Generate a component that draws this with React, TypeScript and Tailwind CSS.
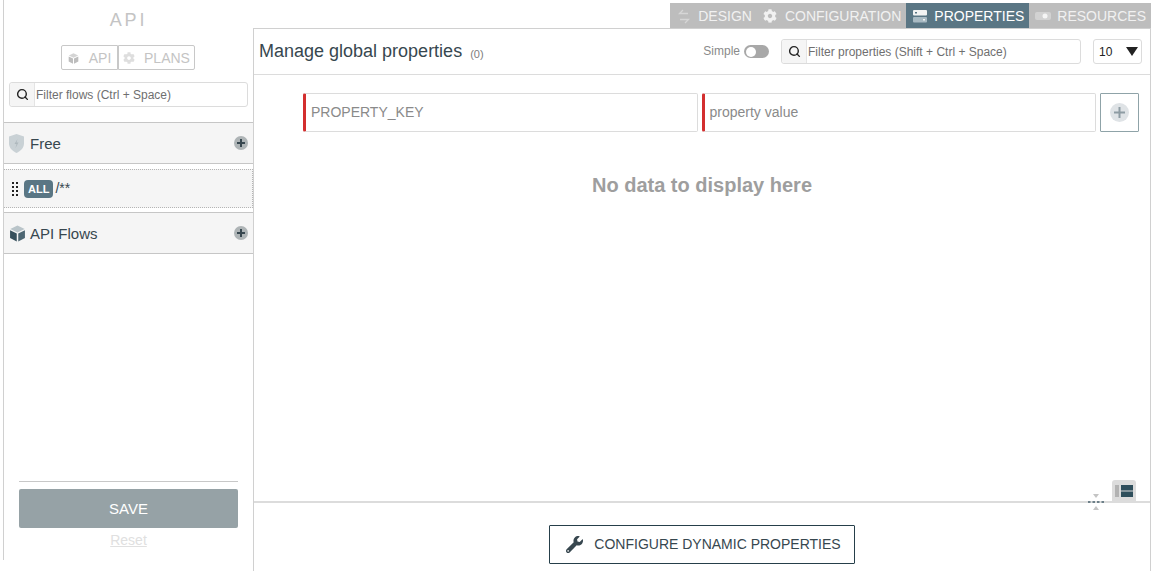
import { Search } from 'lucide-react';
import { FaCog, FaWrench } from 'react-icons/fa';

const font = 'font-["Liberation_Sans",Arial,sans-serif]';

function SearchAddon() {
  return (
    <span className="flex w-[25px] shrink-0 items-center justify-center self-stretch rounded-l-[3px] border-r border-[#e4e4e4] bg-[#f5f5f5]">
      <Search size={13} strokeWidth={2.6} className="text-[#222]" />
    </span>
  );
}

function CubeIcon({ size, top, left, right }: { size: number; top: string; left: string; right: string }) {
  return (
    <svg width={size} height={size} viewBox="0 0 16 16">
      <path d="M8 0.5 14.8 3.8 8 7 1.2 3.8Z" fill={top} />
      <path d="M1 5 7.3 8V15.5L1 12.2Z" fill={left} />
      <path d="M15 5 8.7 8V15.5L15 12.2Z" fill={right} />
    </svg>
  );
}

function PlusDot() {
  return (
    <span className="flex h-[14px] w-[14px] items-center justify-center rounded-full bg-[#aeb4b6]">
      <svg width="10" height="10" viewBox="0 0 10 10">
        <path d="M5 1V9M1 5H9" stroke="#37474f" strokeWidth="2" />
      </svg>
    </span>
  );
}

function GroupHeader({ icon, label }: { icon: React.ReactNode; label: string }) {
  return (
    <div className="flex h-[42px] items-center border-y border-[#c6c6c6] bg-[#f5f5f5] px-[5px]">
      <span className="flex w-[21px] justify-start">{icon}</span>
      <span className="flex-1 pt-[2px] text-[15px] text-[#37474f]">{label}</span>
      <PlusDot />
    </div>
  );
}

function Sidebar() {
  return (
    <aside className="flex h-[560px] w-[250px] shrink-0 flex-col border-l border-[#d0d0d0]">
      <h2 className="mt-[11px] h-[18px] text-center text-[18px] leading-[18px] font-normal tracking-[0.16em] text-[#c4c4c4]">API</h2>
      <div className="mt-[16px] flex justify-center pr-[1px]">
        <button className="flex h-[25px] w-[57px] items-center justify-center gap-[10px] rounded-l-[2px] border border-[#c8c8c8] pt-[1px] text-[14px] text-[#c4c4c4]">
          <CubeIcon size={11} top="#d4d4d4" left="#bdbdbd" right="#bdbdbd" />
          API
        </button>
        <button className="flex h-[25px] w-[77px] items-center justify-center gap-[9px] rounded-r-[2px] border border-[#c8c8c8] pt-[1px] text-[14px] text-[#c4c4c4]">
          <FaCog size={12} className="text-[#dedede]" />
          PLANS
        </button>
      </div>
      <div className="mt-[12px] ml-[5px] flex h-[25px] w-[239px] items-center rounded-[3px] border border-[#dcdcdc]">
        <SearchAddon />
        <span className="pl-[1px] text-[12px] text-[#6f6f6f]">Filter flows (Ctrl + Space)</span>
      </div>
      <div className="mt-[15px]">
        <GroupHeader
          label="Free"
          icon={
            <svg width="15" height="19" viewBox="0 0 15 19">
              <path d="M7.5 0 15 2.5V9.5C15 14 11.5 17 7.5 19 3.5 17 0 14 0 9.5V2.5Z" fill="#c9d1d5" />
              <path d="M8.5 5 5.5 10H7.5L6.5 14 9.5 8.5H7.5Z" fill="#aeb8bd" />
            </svg>
          }
        />
      </div>
      <div className="mt-[5px] flex h-[39px] items-center border-y border-r border-dotted border-[#b5b5b5] bg-[#f5f5f5] pl-[8px]">
        <span className="grid w-[6px] grid-cols-2 gap-x-[2px] gap-y-[2px]">
          {[0, 1, 2, 3, 4, 5, 6, 7].map((i) => (
            <span key={i} className="h-[2px] w-[2px] bg-[#222]" />
          ))}
        </span>
        <span className="ml-[6px] rounded-[4px] bg-[#5a7684] px-[4px] py-[2px] text-[11px] leading-[14px] font-bold text-white">ALL</span>
        <span className="ml-[2px] text-[14px] text-[#37474f]">/**</span>
      </div>
      <div className="mt-[4px]">
        <GroupHeader label="API Flows" icon={<CubeIcon size={17} top="#b9c4c9" left="#37505c" right="#4d6672" />} />
      </div>
      <div className="mx-[15px] mt-auto border-t border-[#c8c8c8] pt-[7px]">
        <button className="flex h-[39px] w-full items-center justify-center rounded-[2px] bg-[#96a2a6] pt-[1px] text-[15px] text-white">SAVE</button>
        <div className="pb-[8px] text-center">
          <a className="text-[14px] leading-[16px] text-[#e0e0e0] underline">Reset</a>
        </div>
      </div>
    </aside>
  );
}

function Tab({ icon, label, active, className }: { icon: React.ReactNode; label: string; active?: boolean; className: string }) {
  return (
    <div className={`flex h-full items-center pt-[1px] text-[14px] whitespace-nowrap ${active ? 'bg-[#5a7684] text-white' : 'text-[#f1f1f1]'} ${className}`}>
      {icon}
      {label}
    </div>
  );
}

function Tabs() {
  return (
    <div className="flex h-[25px] self-end bg-[#bdbdbd]">
      <Tab
        className="gap-[7px] pr-[5px] pl-[7px]"
        label="DESIGN"
        icon={
          <svg width="14" height="15" viewBox="0 0 14 15" fill="none" stroke="#d6d6d6" strokeWidth="1.3">
            <path d="M6 1 2.5 4.5H11M8 14 11.5 10.5H3" />
          </svg>
        }
      />
      <Tab className="gap-[8px] pr-[5px] pl-[6px]" label="CONFIGURATION" icon={<FaCog size={14} className="text-[#f1f1f1]" />} />
      <Tab
        active
        className="gap-[7px] pr-[5px] pl-[7px]"
        label="PROPERTIES"
        icon={
          <svg width="14" height="13" viewBox="0 0 14 13">
            <rect y="0" width="14" height="5.5" rx="1" fill="#f3f3f3" />
            <rect y="7" width="14" height="5.5" rx="1" fill="#a9bac3" />
            <rect x="2" y="2" width="2" height="1.5" fill="#5a7684" />
            <rect x="10" y="9" width="2" height="1.5" fill="#f3f3f3" />
          </svg>
        }
      />
      <Tab
        className="gap-[6px] pr-[5px] pl-[6px]"
        label="RESOURCES"
        icon={
          <svg width="16" height="8" viewBox="0 0 16 8">
            <rect width="16" height="8" rx="2" fill="#d2d2d2" />
            <circle cx="10" cy="4" r="2.5" fill="#f5f5f5" />
          </svg>
        }
      />
    </div>
  );
}

function PropertiesHeader() {
  return (
    <div className="flex h-[46px] shrink-0 items-center border-b border-[#dcdcdc] pr-[8px] pl-[5px]">
      <h1 className="text-[18px] font-normal text-[#37474f]">Manage global properties</h1>
      <span className="mt-[5px] ml-[8px] text-[11px] text-[#7d7d7d]">(0)</span>
      <span className="mb-[2px] ml-auto text-[12px] text-[#8a8a8a]">Simple</span>
      <span className="ml-[4px] flex h-[13px] w-[25px] items-center rounded-full bg-[#a8a8a8] pl-[2px]">
        <span className="h-[10px] w-[10px] rounded-full bg-white" />
      </span>
      <div className="ml-[12px] flex h-[25px] w-[300px] items-center rounded-[3px] border border-[#dcdcdc]">
        <SearchAddon />
        <span className="pl-[1px] text-[12px] text-[#6f6f6f]">Filter properties (Shift + Ctrl + Space)</span>
      </div>
      <div className="ml-[12px] flex h-[25px] w-[49px] items-center justify-between rounded-[3px] border border-[#dcdcdc] pr-[3px] pl-[5px] text-[12px] text-[#222]">
        10
        <svg width="12" height="9" viewBox="0 0 12 9">
          <path d="M0 0H12L6 9Z" fill="#222" />
        </svg>
      </div>
    </div>
  );
}

function AddRow() {
  return (
    <div className="mt-[18px] mr-[11px] ml-[49px] flex gap-[4px]">
      <div className="flex h-[39px] w-[395px] items-center rounded-[2px] border border-l-[3px] border-[#dcdcdc] border-l-[#d32f2f] pl-[5px] text-[14px] text-[#8a8a8a]">PROPERTY_KEY</div>
      <div className="flex h-[39px] w-[395px] items-center rounded-[2px] border border-l-[3px] border-[#dcdcdc] border-l-[#d32f2f] pl-[5px] text-[14px] text-[#8a8a8a]">property value</div>
      <button className="flex h-[39px] w-[39px] items-center justify-center rounded-[1px] border border-[#8fa3a8]">
        <span className="flex h-[19px] w-[19px] items-center justify-center rounded-full bg-[#dfe3e6]">
          <svg width="13" height="13" viewBox="0 0 13 13">
            <path d="M6.5 1V12M1 6.5H12" stroke="#8e9ca3" strokeWidth="2" />
          </svg>
        </span>
      </button>
    </div>
  );
}

export default function App() {
  return (
    <div className={`flex h-[571px] w-[1155px] overflow-hidden bg-white pl-[3px] ${font}`}>
      <Sidebar />
      <main className="flex w-[898px] flex-col">
        <div className="mt-[3px] flex flex-col">
          <Tabs />
        </div>
        <section className="relative flex flex-1 flex-col border-t border-r border-l border-[#d0d0d0]">
          <PropertiesHeader />
          <AddRow />
          <p className="mt-[38px] text-center text-[20px] font-bold text-[#9e9e9e]">No data to display here</p>

          <div className="mt-auto flex h-[70px] items-start justify-center border-t-2 border-[#dcdcdc] pt-[22px]">
            <button className="flex h-[39px] w-[306px] items-center justify-center gap-[11px] rounded-[1px] border border-[#263f4a] pl-[3px] text-[14px] text-[#37474f]">
              <FaWrench size={17} className="text-[#37474f]" />
              CONFIGURE DYNAMIC PROPERTIES
            </button>
          </div>

          {/* splitter handle and layout toggle sit over the divider */}
          <span className="absolute right-[14px] bottom-[70px] flex h-[21px] w-[24px] items-center justify-center rounded-t-[3px] bg-[#dcdcdc]">
            <svg width="18" height="12" viewBox="0 0 18 12">
              <rect width="4" height="12" fill="#b2b2b2" />
              <rect x="6" width="12" height="5.5" fill="#2f4f5c" />
              <rect x="6" y="6.5" width="12" height="5.5" fill="#2f4f5c" />
            </svg>
          </span>
          <span className="absolute right-[46px] bottom-[60px]">
            <svg width="16" height="18" viewBox="0 0 16 18">
              <path d="M5 1H11L8 5Z M8 13 11 17H5Z" fill="#c4c4c4" />
              <path d="M0 9H2.5M4.5 9H7M9 9H11.5M13.5 9H16" stroke="#48626e" strokeWidth="1.5" />
            </svg>
          </span>
        </section>
      </main>
    </div>
  );
}
